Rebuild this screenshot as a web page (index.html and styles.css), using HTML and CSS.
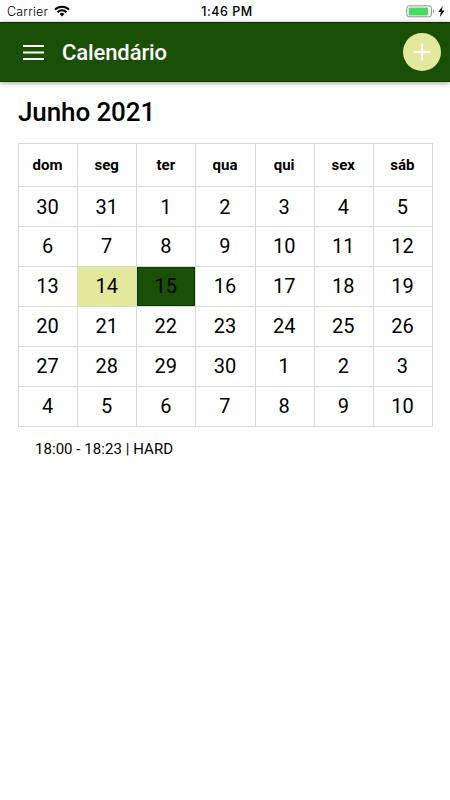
FILE: index.html
```
<!DOCTYPE html>
<html lang="pt-BR">
<head>
  <meta charset="UTF-8">
  <meta name="viewport" content="width=device-width, initial-scale=1.0">
  <title>Calendário</title>
  <link rel="stylesheet" href="styles.css">
</head>
<body>
  <div class="status">
    <div class="carrier">
      <span>Carrier</span>
      <svg class="wifi" viewBox="0 0 16 12" width="16" height="12">
        <path d="M1 4.6a10 10 0 0 1 14 0M3.5 7.2a6.4 6.4 0 0 1 9 0" fill="none" stroke="#000" stroke-width="2"/>
        <path d="M8 11.4L5.6 9a3.4 3.4 0 0 1 4.8 0z"/>
      </svg>
    </div>
    <div class="time">1:46 PM</div>
    <div class="power">
      <svg class="battery" viewBox="0 0 29 13" width="29" height="13">
        <rect x="0.8" y="0.8" width="24.6" height="11" rx="2.4" fill="#fff" stroke="#8d8d8d"/>
        <rect x="2.8" y="2.6" width="19.2" height="7.8" rx="0.6" fill="#4cd964"/>
        <path d="M27 4.3c1.6.6 1.6 3.4 0 4z" fill="#8d8d8d"/>
      </svg>
      <svg class="bolt" viewBox="0 0 7 11" width="7" height="11">
        <path d="M4.7 0L0.3 6h2.6L1.8 11 6.6 4.6H3.9z"/>
      </svg>
    </div>
  </div>

  <div class="header">
    <svg class="menu" viewBox="0 0 21 15" width="21" height="15">
      <path d="M0 1h21M0 7.5h21M0 14h21" stroke="#fff" stroke-width="2"/>
    </svg>
    <div class="title">Calendário</div>
    <button class="add" aria-label="Adicionar">
      <svg viewBox="0 0 18 18" width="18" height="18">
        <path d="M9 0.5v17M0.5 9h17" stroke="#fff" stroke-width="2"/>
      </svg>
    </button>
  </div>

  <div class="content">
    <h1>Junho 2021</h1>
    <table>
      <thead>
        <tr><th>dom</th><th>seg</th><th>ter</th><th>qua</th><th>qui</th><th>sex</th><th>sáb</th></tr>
      </thead>
      <tbody>
        <tr><td>30</td><td>31</td><td>1</td><td>2</td><td>3</td><td>4</td><td>5</td></tr>
        <tr><td>6</td><td>7</td><td>8</td><td>9</td><td>10</td><td>11</td><td>12</td></tr>
        <tr><td>13</td><td class="marked">14</td><td class="selected">15</td><td>16</td><td>17</td><td>18</td><td>19</td></tr>
        <tr><td>20</td><td>21</td><td>22</td><td>23</td><td>24</td><td>25</td><td>26</td></tr>
        <tr><td>27</td><td>28</td><td>29</td><td>30</td><td>1</td><td>2</td><td>3</td></tr>
        <tr><td>4</td><td>5</td><td>6</td><td>7</td><td>8</td><td>9</td><td>10</td></tr>
      </tbody>
    </table>
    <div class="event">18:00 - 18:23 | HARD</div>
  </div>
</body>
</html>
```

FILE: styles.css
```
* {
  box-sizing: border-box;
}
body {
  margin: 0;
  background: #fff;
  color: #000;
  font-family: Roboto, sans-serif;
}
.status {
  display: grid;
  grid-template-columns: 1fr auto 1fr;
  height: 22px;
  padding: 0 5px 0 7px;
  align-items: center;
  font-family: Inter, sans-serif;
  font-size: 12.5px;
}
.carrier {
  display: flex;
  align-items: center;
  gap: 6px;
  font-weight: 300;
  letter-spacing: 0.2px;
}
.time {
  padding-left: 2px;
  font-size: 12.5px;
  font-weight: 500;
  letter-spacing: 0.5px;
}
.power {
  display: flex;
  justify-content: flex-end;
  align-items: center;
  gap: 3px;
}
.header {
  display: flex;
  align-items: center;
  height: 60px;
  padding: 0 9px 0 23px;
  background: #1a5006;
  border-top: 1px solid #092b02;
  border-bottom: 1px solid #123f04;
  box-shadow: 0 1px 5px rgba(0, 0, 0, 0.4);
  color: #fff;
}
.title {
  flex: 1;
  margin-left: 18px;
  font-size: 22px;
  font-weight: 500;
  letter-spacing: -0.1px;
}
.add {
  display: flex;
  align-items: center;
  justify-content: center;
  width: 38px;
  height: 38px;
  padding: 0;
  border: none;
  border-radius: 50%;
  background: #e3e89d;
}
.content {
  padding: 14px 17px 0 18px;
}
h1 {
  margin: 0 0 15px;
  font-size: 26px;
  line-height: 32px;
  font-weight: 500;
  letter-spacing: -0.1px;
}
table {
  width: 415px;
  table-layout: fixed;
  border-collapse: collapse;
}
th, td {
  padding: 0 1px 0 0;
  border: 1px solid #d9d9d9;
  text-align: center;
}
th {
  height: 43px;
  font-size: 15px;
  font-weight: 700;
}
td {
  height: 40px;
  padding-bottom: 1px;
  font-size: 20px;
  font-weight: 400;
}
tbody tr:first-child td {
  padding-bottom: 0;
}
.marked {
  background: #e3e89d;
}
.selected {
  background: #1a5006;
  box-shadow: inset 0 0 0 1px #0b3a02;
}
.event {
  margin: 12px 0 0 17px;
  font-size: 15px;
  line-height: 20px;
  letter-spacing: 0.05px;
}
```
